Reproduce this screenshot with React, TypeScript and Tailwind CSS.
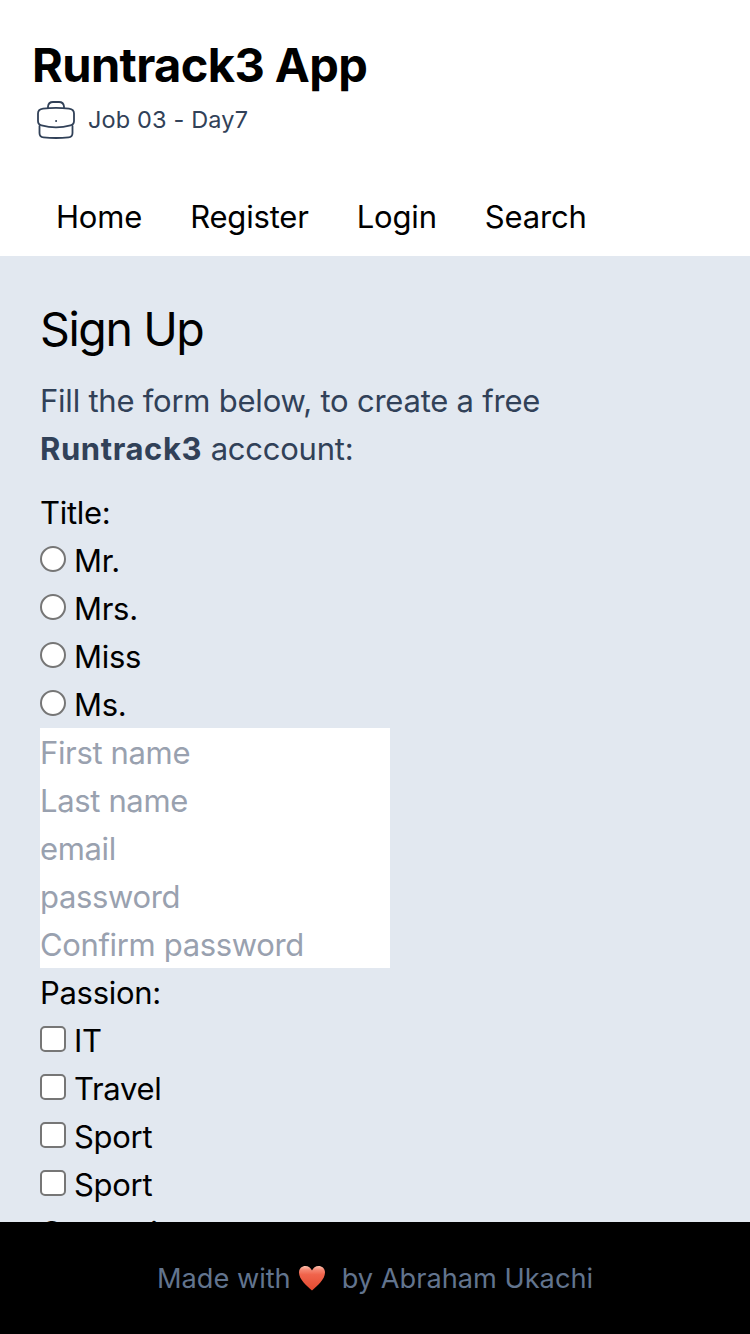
import React from "react";

const titles = ["Mr.", "Mrs.", "Miss", "Ms."];
const fields = ["First name", "Last name", "email", "password", "Confirm password"];
const passions = ["IT", "Travel", "Sport", "Sport"];
const links = ["Home", "Register", "Login", "Search"];

function Briefcase() {
  return (
    <svg className="h-10 w-10" viewBox="0 0 40 40" fill="none" stroke="currentColor" strokeWidth="1.8" strokeLinecap="round">
      <path d="M12 8V6.500q.5-4.500 5-4.500h6q4.500 0 5 4.500V8" />
      <path d="M7 8.600q13-1.600 26 0 5 .6 5 5v7.400q0 3.600-3.500 4.400Q20 29.200 5.500 25.400 2 24.600 2 21v-7.400q0-4.400 5-5z" />
      <path d="M3.500 26v7q0 4 4 4.400 12.500 1.200 25 0 4-.4 4-4.400v-7" />
      <circle cx="20" cy="21" r=".5" fill="currentColor" strokeWidth="1" />
    </svg>
  );
}

function Heart() {
  return (
    <svg className="h-[26px] w-[28px]" viewBox="0 0 28 26">
      <defs>
        <linearGradient id="heart" x1="0" y1="0" x2="0" y2="1">
          <stop offset="0" stopColor="#ffc1ae" />
          <stop offset=".16" stopColor="#f58570" />
          <stop offset=".35" stopColor="#f0644c" />
          <stop offset="1" stopColor="#e4492f" />
        </linearGradient>
      </defs>
      <path d="M14 25.500C9 21 1 14.500 1 7.500 1 3.500 4 1 7.300 1 10.500 1 12.800 2.800 14 5.500 15.200 2.800 17.500 1 20.700 1 24 1 27 3.500 27 7.500 27 14.500 19 21 14 25.500z" fill="url(#heart)" />
    </svg>
  );
}

export default function App() {
  return (
    <div className="flex h-[1334px] w-[750px] flex-col overflow-hidden bg-white font-['Inter',sans-serif] text-[31px] leading-[48px] font-[430] tracking-[-0.3px] text-black">
      <header className="flex h-64 shrink-0 flex-col">
        <h1 className="mt-8 ml-8 h-16 text-[47px] leading-[65px] font-bold tracking-[-0.6px]">Runtrack3 App</h1>
        <div className="ml-9 flex h-12 items-center gap-3 text-slate-700">
          <Briefcase />
          <p className="text-[23.5px] tracking-[0.15px]">Job 03 - Day7</p>
        </div>
        <nav className="mt-[49px] ml-14 flex gap-12 tracking-[-0.18px]">
          {links.map((l) => <a key={l}>{l}</a>)}
        </nav>
      </header>
      <main className="min-h-0 flex-1 overflow-hidden bg-slate-200 px-10 pt-10">
        <h2 className="h-16 text-[46.5px] leading-[66px] tracking-[-1.4px]">Sign Up</h2>
        <p className="mt-[17px] tracking-[-0.23px] text-slate-700">Fill the form below, to create a free<br /><b className="tracking-[0.6px]">Runtrack3</b> acccount:</p>
        <form className="mt-[15px] leading-[50px]">
          <p className="h-12">Title:</p>
          {titles.map((t) => (
            <label key={t} className="flex h-12 gap-2">
              <input type="radio" name="title" className="mt-[10px] h-[26px] w-[26px] appearance-none rounded-full border-2 border-[#767676] bg-white" />
              <span>{t}</span>
            </label>
          ))}
          {fields.map((f) => (
            <input key={f} placeholder={f} className="block h-12 w-[350px] bg-white pt-px leading-[47px] tracking-[-0.35px] placeholder:text-gray-400" />
          ))}
          <p className="h-12">Passion:</p>
          {passions.map((p, i) => (
            <label key={i} className="flex h-12 gap-2">
              <input type="checkbox" className="mt-[10px] h-[26px] w-[26px] appearance-none rounded-[5px] border-2 border-[#767676] bg-white" />
              <span>{p}</span>
            </label>
          ))}
          <button type="button" className="block">Connexion</button>
        </form>
      </main>
      <footer className="flex h-28 shrink-0 items-center justify-center bg-black text-[27.2px] tracking-normal text-slate-500">
        <span className="pt-px">Made with</span><span className="mr-4 ml-[7px]"><Heart /></span><span className="pt-px">by Abraham Ukachi</span>
      </footer>
    </div>
  );
}
